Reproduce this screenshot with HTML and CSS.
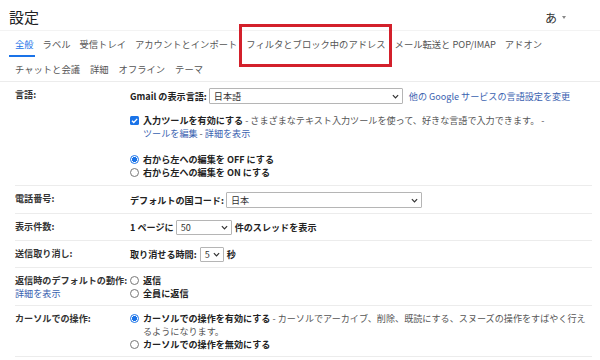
FILE: index.html
```html
<!DOCTYPE html>
<html lang="ja">
<head>
<meta charset="utf-8">
<link rel="stylesheet" href="styles.css">
</head>
<body>
<header class="top">
  <h1 class="title">設定</h1>
  <div class="ime">あ <span class="caret"></span></div>
</header>
<nav class="tabs">
  <div class="tabrow">
    <span class="tab active">全般</span>
    <span class="tab">ラベル</span>
    <span class="tab">受信トレイ</span>
    <span class="tab">アカウントとインポート</span>
    <span class="tab boxed">フィルタとブロック中のアドレス</span>
    <span class="tab">メール転送と POP/IMAP</span>
    <span class="tab">アドオン</span>
  </div>
  <div class="tabrow second">
    <span class="tab">チャットと会議</span>
    <span class="tab">詳細</span>
    <span class="tab">オフライン</span>
    <span class="tab">テーマ</span>
  </div>
</nav>
<main class="settings">
  <section class="row">
    <div class="label">言語:</div>
    <div class="content">
      <div class="line">
        <b>Gmail の表示言語:</b>
        <span class="select lang">日本語<svg class="chev" viewBox="0 0 8 5"><path d="M1 1l3 3 3-3" fill="none" stroke="#333" stroke-width="1.4"/></svg></span>
        <a class="link">他の Google サービスの言語設定を変更</a>
      </div>
      <div class="opt block-gap">
        <span class="checkbox"><svg viewBox="0 0 10 10"><path d="M2.2 5.2l2 2 3.8-4" fill="none" stroke="#fff" stroke-width="1.5"/></svg></span>
        <div class="opt-text"><b>入力ツールを有効にする</b><span class="desc"> - さまざまなテキスト入力ツールを使って、好きな言語で入力できます。 - </span><span class="nowrap"><a class="link">ツールを編集</a><span class="desc"> - </span><a class="link">詳細を表示</a></span></div>
      </div>
      <div class="opt radio-gap"><span class="radio on"></span><div class="opt-text"><b>右から左への編集を OFF にする</b></div></div>
      <div class="opt"><span class="radio"></span><div class="opt-text"><b>右から左への編集を ON にする</b></div></div>
    </div>
  </section>
  <section class="row">
    <div class="label">電話番号:</div>
    <div class="content">
      <div class="line"><b>デフォルトの国コード:</b>
        <span class="select phone">日本<svg class="chev" viewBox="0 0 8 5"><path d="M1 1l3 3 3-3" fill="none" stroke="#333" stroke-width="1.4"/></svg></span>
      </div>
    </div>
  </section>
  <section class="row">
    <div class="label">表示件数:</div>
    <div class="content">
      <div class="line"><b>1 ページに</b>
        <span class="select small w50">50<svg class="chev" viewBox="0 0 8 5"><path d="M1 1l3 3 3-3" fill="none" stroke="#333" stroke-width="1.4"/></svg></span>
        <b>件のスレッドを表示</b>
      </div>
    </div>
  </section>
  <section class="row">
    <div class="label">送信取り消し:</div>
    <div class="content">
      <div class="line"><b>取り消せる時間:</b>
        <span class="select small w5">5<svg class="chev" viewBox="0 0 8 5"><path d="M1 1l3 3 3-3" fill="none" stroke="#333" stroke-width="1.4"/></svg></span>
        <b>秒</b>
      </div>
    </div>
  </section>
  <section class="row">
    <div class="label">返信時のデフォルトの動作:<br><a class="link normal">詳細を表示</a></div>
    <div class="content">
      <div class="opt"><span class="radio"></span><div class="opt-text"><b>返信</b></div></div>
      <div class="opt"><span class="radio"></span><div class="opt-text"><b>全員に返信</b></div></div>
    </div>
  </section>
  <section class="row">
    <div class="label">カーソルでの操作:</div>
    <div class="content">
      <div class="opt"><span class="radio on"></span><div class="opt-text"><b>カーソルでの操作を有効にする</b><span class="desc"> - カーソルでアーカイブ、削除、既読にする、スヌーズの操作をすばやく行えるようになります。</span></div></div>
      <div class="opt"><span class="radio"></span><div class="opt-text"><b>カーソルでの操作を無効にする</b></div></div>
    </div>
  </section>
</main>
</body>
</html>
```
FILE: styles.css
```css
* { box-sizing: border-box; }
body {
  margin: 0;
  width: 600px;
  height: 360px;
  overflow: hidden;
  background: #fff;
  font-family: "Noto Sans CJK JP", "Noto Sans", sans-serif;
  color: #222;
  font-size: 9.1px;
  line-height: 13px;
}
.top {
  height: 30px;
  display: flex;
  justify-content: space-between;
  align-items: center;
  padding: 4px 34px 0 9px;
  box-shadow: 0 1px 0 #f3f3f3;
}
.title {
  margin: 0;
  font-size: 15px;
  font-weight: 400;
  line-height: 20px;
  color: #202124;
}
.ime {
  font-size: 12px;
  color: #333;
  display: flex;
  align-items: center;
  gap: 5px;
}
.caret {
  width: 0; height: 0;
  border-left: 2.5px solid transparent;
  border-right: 2.5px solid transparent;
  border-top: 3px solid #888;
}
.tabs {
  border-bottom: 1px solid #ececec;
  padding-left: 15px;
}
.tabrow {
  display: flex;
  gap: 9px;
  height: 26px;
  align-items: center;
  margin-top: 1px;
  font-size: 9.3px;
  color: #555;
}
.tabrow.second { height: 24px; margin-top: 0; gap: 10px; }
.tab { position: relative; white-space: nowrap; }
.tab.active { color: #1a73e8; }
.tab.active::after {
  content: "";
  position: absolute;
  left: -6px; right: -1px;
  top: 17px;
  height: 2px;
  background: #1a73e8;
}
.tab.boxed::after {
  content: "";
  position: absolute;
  left: -7px; right: -6px;
  top: -14px; bottom: -16px;
  border: 3px solid #d3202b;
}
.settings { margin: 0 8px 0 15px; }
.row {
  display: grid;
  grid-template-columns: 115px 1fr;
  padding: 6px 0 5px;
  border-bottom: 1px solid #ececec;
}
.row:first-child { padding-bottom: 6px; }
.content { max-width: 458px; }
.label {
  font-weight: 700;
  color: #333;
  white-space: nowrap;
  line-height: 13px;
}
.label .link.normal { font-weight: 400; }
.line {
  display: flex;
  align-items: center;
  min-height: 15px;
  white-space: nowrap;
}
.line b { font-weight: 700; color: #222; }
.link { color: #3a62b0; text-decoration: none; }
.line .link { margin-left: 3px; }
.nowrap { white-space: nowrap; }
.select {
  display: inline-flex;
  align-items: center;
  justify-content: space-between;
  height: 15px;
  border: 1px solid #b5b5b5;
  border-radius: 1px;
  background: #fff;
  padding: 0 3px 0 4px;
  font-weight: 400;
  color: #333;
  margin: 0 3px;
}
.select.lang { width: 194px; height: 16px; margin-left: 2px; }
.select.phone { width: 196px; height: 16px; margin-left: 2px; }
.select.w50 { width: 56px; margin: 0 3px 0 2px; }
.select.w5 { width: 24px; margin: 0 3px 0 3px; }
.chev { width: 7px; height: 5px; }
.opt { display: flex; align-items: flex-start; }
.opt-text { flex: 1; }
.opt-text b { font-weight: 700; color: #222; }
.desc { color: #555; }
.block-gap { margin-top: 10px; }
.radio-gap { margin-top: 13px; }
.checkbox {
  flex: none;
  width: 9px; height: 9px;
  margin: 2px 4px 0 0;
  background: #1a73e8;
  border-radius: 1.5px;
  display: flex;
}
.checkbox svg { width: 9px; height: 9px; }
.radio {
  flex: none;
  width: 9px; height: 9px;
  margin: 2px 4px 0 0;
  border-radius: 50%;
  border: 1px solid #777;
  background: #fff;
}
.radio.on {
  border-color: #1a73e8;
  background: radial-gradient(circle, #1a73e8 0 2.3px, #fff 2.6px);
}
```
